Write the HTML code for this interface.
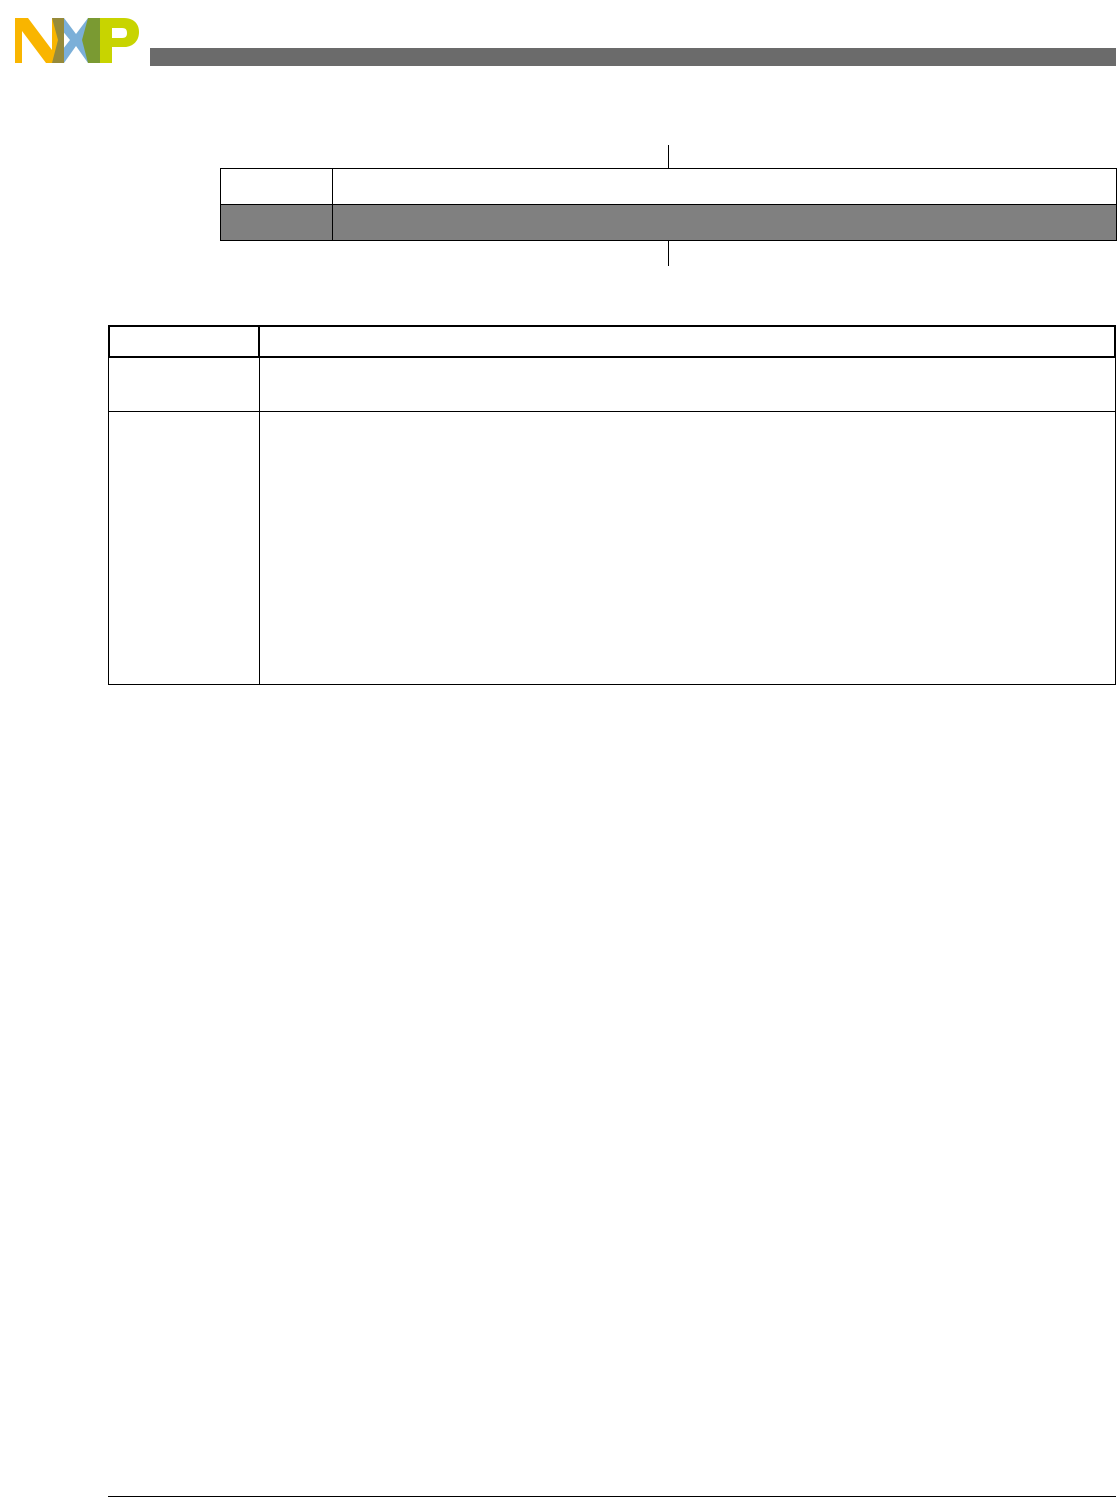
<!DOCTYPE html>
<html><head><meta charset="utf-8"><style>
html,body{margin:0;padding:0;background:#fff;}
body{width:1118px;height:1498px;position:relative;overflow:hidden;font-family:"Liberation Sans",sans-serif;}
.a{position:absolute;}
</style></head><body>
<svg class="a" style="left:0;top:0" width="150" height="70" viewBox="0 0 150 70">
  <polygon points="15,18 28,18 52,50 52,18 58,18 58,63 46,63 22,31 22,63 15,63" fill="#f9b500"/>
  <polygon points="52,18 64,18 76,34 88,18 96,18 82,40 96,63 88,63 76,46 64,63 52,63 70,40" fill="#7bafd8"/>
  <polygon points="52,18 64,18 64,63 52,63 58,40" fill="#968a3a"/>
  <polygon points="88,18 100,18 100,63 88,63 82,40" fill="#7a9a32"/>
  <path d="M100,18 H124 C134,18 139,24 139,32 C139,41 133,47 124,47 H112 V63 H100 Z M112,28 V38 H122 C126,38 127,36 127,33 C127,30 126,28 122,28 Z" fill="#c8d400" fill-rule="evenodd"/>
</svg>
<div class="a" style="left:150px;top:48px;width:966px;height:18px;background:#6b6b6b"></div>

<div class="a" style="left:668px;top:145px;width:1px;height:23px;background:#000"></div>
<div class="a" style="left:668px;top:240px;width:1px;height:26px;background:#000"></div>
<div class="a" style="left:220px;top:168px;width:895px;height:71px;border:1px solid #000"></div>
<div class="a" style="left:221px;top:205px;width:895px;height:35px;background:#808080"></div>
<div class="a" style="left:220px;top:204px;width:896px;height:1px;background:#000"></div>
<div class="a" style="left:332px;top:168px;width:1px;height:72px;background:#000"></div>

<div class="a" style="left:108px;top:325px;width:1006px;height:357px;border:1px solid #000;border-top:2px solid #000;"></div>
<div class="a" style="left:108px;top:325px;width:1008px;height:33px;box-sizing:border-box;border:2px solid #000"></div>
<div class="a" style="left:258px;top:325px;width:2px;height:33px;background:#000"></div>
<div class="a" style="left:259px;top:358px;width:1px;height:326px;background:#000"></div>
<div class="a" style="left:108px;top:411px;width:1008px;height:1px;background:#000"></div>

<div class="a" style="left:108px;top:1496px;width:1008px;height:1px;background:#000"></div>
</body></html>
